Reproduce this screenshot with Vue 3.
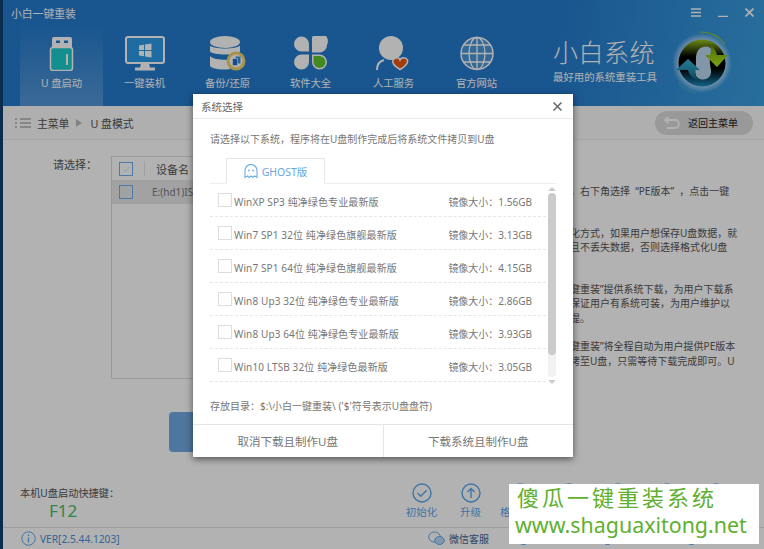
<template>
  <div class="desktop">
    <div class="window">
      <header class="header">
        <div class="title-row">
          <span class="app-title">小白一键重装</span>
          <div class="win-controls">
            <svg width="10" height="9" viewBox="0 0 10 9"><path d="M0 1h10M0 4.500h10M0 8h10" stroke="#fff" stroke-width="1.500" /></svg>
            <svg width="10" height="9" viewBox="0 0 10 9"><path d="M0 8.500h10" stroke="#fff" stroke-width="1.500" /></svg>
            <svg width="9" height="9" viewBox="0 0 9 9"><path d="M.5.500l8 8M8.500.500l-8 8" stroke="#fff" stroke-width="1.600" /></svg>
          </div>
        </div>
        <div class="nav-row">
          <nav class="nav">
            <div class="nav-item active">
              <svg width="36" height="35" viewBox="0 0 36 35">
                <rect x="8" y="1" width="20" height="12" rx="2" fill="#fff" />
                <rect x="12" y="4.500" width="4" height="2.500" fill="#257bce" />
                <rect x="20" y="4.500" width="4" height="2.500" fill="#257bce" />
                <rect x="6.500" y="11.500" width="22" height="23" rx="2.500" fill="#1ecdcd" stroke="#fff" stroke-width="1.500" />
                <rect x="22" y="18" width="2" height="11" fill="#fff" />
              </svg>
              <span>U 盘启动</span>
            </div>
            <div class="nav-item">
              <svg width="40" height="35" viewBox="0 0 40 35">
                <rect x="1" y="1" width="38" height="26" rx="2" fill="#2d9be8" stroke="#fff" stroke-width="2" />
                <path d="M14 9.500l5-.8v5.300h-5zM20 8.500l6.500-1v6.500H20zM14 15h5v5.300l-5-.8zM20 15h6.500v6.500l-6.500-1z" fill="#fff" />
                <path d="M16 27h8l1 5H15z" fill="#fff" />
                <rect x="10" y="31.500" width="20" height="3" fill="#fff" />
              </svg>
              <span>一键装机</span>
            </div>
            <div class="nav-item">
              <svg width="36" height="35" viewBox="0 0 36 35">
                <ellipse cx="15" cy="6" rx="15" ry="6" fill="#fff" />
                <path d="M0 9.500c3 4 27 4 30 0v6c-3 4-27 4-30 0z" fill="#fff" />
                <path d="M0 20c3 4 16 4 20 3.500V33c-8 1.500-18 0-20-3z" fill="#fff" />
                <circle cx="26" cy="25" r="9.500" fill="#f2d36b" />
                <circle cx="26" cy="25" r="6.500" fill="#fff" />
                <rect x="25.500" y="20.500" width="5" height="7" fill="#3b8fe0" />
                <rect x="22.500" y="22.500" width="5" height="7" fill="#1f6fc0" stroke="#fff" stroke-width=".6" />
              </svg>
              <span>备份/还原</span>
            </div>
            <div class="nav-item">
              <svg width="36" height="35" viewBox="0 0 36 35">
                <path d="M2 9a7.500 7.500 0 0 1 15 0v7.500H9.500A7.500 7.500 0 0 1 2 9z" fill="#fff" transform="translate(-1 -1)" />
                <path d="M19 1.500a7.500 7.500 0 0 1 15 7.500 7.500 7.500 0 0 1-7.500 7.500H19z" fill="#fff" />
                <path d="M1 26a7.500 7.500 0 0 1 7.500-7.500H16V26a7.500 7.500 0 0 1-15 0z" fill="#fff" />
                <path d="M19 18.500h7.500a7.500 7.500 0 0 1 0 15 7.500 7.500 0 0 1-7.500-7.500z" fill="#fff" />
                <path d="M20.500 20h6a6 6 0 0 1 0 12 6 6 0 0 1-6-6z" fill="#5fc52e" />
              </svg>
              <span>软件大全</span>
            </div>
            <div class="nav-item">
              <svg width="36" height="35" viewBox="0 0 36 35">
                <circle cx="15" cy="12" r="12" fill="#fff" />
                <path d="M1 34c0-6 3-9 7-10" stroke="#fff" stroke-width="2" fill="none" />
                <path d="M17 27c2-3 6-3 7 0 1-3 6-3 7.500 0 1 3-3 7-7.500 9.500-4-2.500-8.500-6.500-7-9.500z" transform="translate(0 -3)" fill="#e8560f" stroke="#fff" stroke-width="1.500" />
              </svg>
              <span>人工服务</span>
            </div>
            <div class="nav-item">
              <svg width="36" height="35" viewBox="0 0 36 35">
                <circle cx="18" cy="17.500" r="16" fill="#4b96d8" stroke="#fff" stroke-width="1.500" />
                <ellipse cx="18" cy="17.500" rx="8" ry="16" fill="none" stroke="#fff" stroke-width="1.300" />
                <path d="M18 1.500v32M2 17.500h32M4.500 9h27M4.500 26h27" stroke="#fff" stroke-width="1.300" />
              </svg>
              <span>官方网站</span>
            </div>
          </nav>
          <div class="brand">
            <div class="brand-name">小白系统</div>
            <div class="brand-sub">最好用的系统重装工具</div>
          </div>
          <svg class="brand-logo" width="64" height="64" viewBox="0 0 64 64">
            <defs>
              <radialGradient id="halo" cx="50%" cy="50%" r="50%">
                <stop offset="72%" stop-color="#d6ecff" stop-opacity=".8" />
                <stop offset="100%" stop-color="#d6ecff" stop-opacity="0" />
              </radialGradient>
              <linearGradient id="disc" x1="0" y1="0" x2="0" y2="1">
                <stop offset="0" stop-color="#9cc81c" />
                <stop offset=".36" stop-color="#000" />
                <stop offset=".62" stop-color="#000" />
                <stop offset="1" stop-color="#1a8fc4" />
              </linearGradient>
              <linearGradient id="greenArrow" x1="0" y1="0" x2="0" y2="1">
                <stop offset="0" stop-color="#6f9e12" />
                <stop offset="1" stop-color="#b4ea1c" />
              </linearGradient>
              <linearGradient id="blueArrow" x1="0" y1="0" x2="0" y2="1">
                <stop offset="0" stop-color="#37b8d8" />
                <stop offset="1" stop-color="#16688f" />
              </linearGradient>
            </defs>
            <circle cx="32" cy="32" r="30" fill="url(#halo)" />
            <path d="M30 1a31 31 0 0 1 25 12" fill="none" stroke="#8dc63f" stroke-width="1.200" />
            <path d="M8 52a31 31 0 0 0 18 10" fill="none" stroke="#3fa9c9" stroke-width="1.200" />
            <circle cx="32" cy="32" r="23.500" fill="url(#disc)" />
            <path d="M33 16c7-2 10 2 8 8-2 5-1 9 0 15 1 7-5 11-11 9-6-2-5-9-4-15 0-6-1-15 7-17z" fill="#b9d8ef" />
            <path d="M41 15c3 2 5 5 6 9h11L47 36 35 24h5c1-3 1-6 1-9z" fill="url(#greenArrow)" />
            <path d="M18 28L30 39h-5c0 4 1 7 3 10-5-2-9-5-10-10H6z" fill="url(#blueArrow)" />
          </svg>
        </div>
      </header>

      <div class="crumb-bar">
        <div class="crumbs">
          <svg width="16" height="10" viewBox="0 0 16 10"><path d="M0 1h2M5 1h11M0 5h2M5 5h11M0 9h2M5 9h11" stroke="#888" stroke-width="1" /></svg>
          <span>主菜单</span>
          <i class="crumb-arrow"></i>
          <span>U 盘模式</span>
        </div>
        <div class="back-btn">
          <svg width="16" height="13" viewBox="0 0 16 13"><path d="M4.500 1L1 4l3.500 3M1 4h10a3.500 3.500 0 0 1 0 8H3" fill="none" stroke="#fff" stroke-width="1.800" /></svg>
          <span>返回主菜单</span>
        </div>
      </div>

      <main class="main">
        <div class="pick-label">请选择：</div>
        <div class="pick-col">
          <div class="table">
            <div class="t-head">
              <svg class="t-check" width="14" height="14" viewBox="0 0 14 14"><rect x=".5" y=".5" width="13" height="13" fill="#fff" stroke="#6db0f2" /><path d="M4 7l2.300 2.300L10.500 5" fill="none" stroke="#cfe3f7" /></svg>
              <span class="t-sep"></span>
              <span>设备名</span>
            </div>
            <div class="t-row">
              <svg class="t-check" width="14" height="14" viewBox="0 0 14 14"><rect x=".5" y=".5" width="13" height="13" fill="#e9e9e9" stroke="#6db0f2" /><path d="M4 7l2.300 2.300L10.500 5" fill="none" stroke="#cfe3f7" /></svg>
              <span class="t-device">E:(hd1)ISO</span>
            </div>
          </div>
          <div class="make-btn"></div>
        </div>
        <div class="notes">
          <p class="note">，右下角选择&nbsp; “PE版本”&nbsp; ，点击一键</p>
          <p class="note">化方式，如果用户想保存U盘数据，就<br />且不丢失数据，否则选择格式化U盘</p>
          <p class="note">键重装”提供系统下载，为用户下载系<br />保证用户有系统可装，为用户维护以<br />提。</p>
          <p class="note tight">键重装”将全程自动为用户提供PE版本<br />拷至U盘，只需等待下载完成即可。U</p>
        </div>
      </main>

      <section class="tools-bar">
        <div class="hotkey">
          <div>本机U盘启动快捷键：</div>
          <div class="hotkey-value">F12</div>
        </div>
        <div class="tools">
          <div v-for="(t, i) in tools" :key="i" class="tool">
            <svg width="20" height="20" viewBox="0 0 20 20">
              <circle cx="10" cy="10" r="9" fill="none" stroke="#5da7ee" stroke-width="1.400" />
              <path v-if="t.icon === 'check'" d="M5.500 10l3.200 3.200 6-6" fill="none" stroke="#5da7ee" stroke-width="1.400" />
              <path v-else d="M10 15V5.500M6.500 9L10 5.500 13.500 9" fill="none" stroke="#5da7ee" stroke-width="1.400" />
            </svg>
            <span v-if="t.name" :class="{ cut: t.cut }">{{ t.name }}</span>
          </div>
        </div>
      </section>

      <footer class="status">
        <div class="version">
          <svg width="15" height="15" viewBox="0 0 15 15">
            <circle cx="7.500" cy="7.500" r="6.700" fill="none" stroke="#5da7ee" stroke-width="1" />
            <path d="M7.500 6.500V11.500M7.500 3.500v1.500" stroke="#5da7ee" stroke-width="1.300" />
          </svg>
          <span>VER[2.5.44.1203]</span>
        </div>
        <div class="links">
          <div v-for="(l, i) in links" :key="i" class="link">
            <svg width="17" height="15" viewBox="0 0 17 15">
              <ellipse cx="6.500" cy="6" rx="5.800" ry="5" fill="none" stroke="#5da7ee" stroke-width="1" />
              <ellipse cx="11.500" cy="9.500" rx="4.800" ry="4" fill="#b9d8f5" stroke="#5da7ee" stroke-width="1" />
            </svg>
            <span v-if="l">{{ l }}</span>
          </div>
        </div>
      </footer>

      <div class="mask"></div>

      <section class="dialog">
        <div class="dialog-head">
          <span>系统选择</span>
          <svg width="9" height="9" viewBox="0 0 9 9"><path d="M.5.500l8 8M8.500.500l-8 8" stroke="#666" stroke-width="1.500" /></svg>
        </div>
        <p class="dialog-intro">请选择以下系统，程序将在U盘制作完成后将系统文件拷贝到U盘</p>
        <div class="tab-strip">
          <div class="tab">
            <svg width="14" height="15" viewBox="0 0 14 15">
              <path d="M1 13.500V6.500a6 6 0 0 1 12 0v7l-2.400-1.600-1.800 1.600-1.800-1.600-1.800 1.600-1.800-1.600z" fill="none" stroke="#6aabea" stroke-width="1.100" />
              <circle cx="5" cy="6.500" r=".9" fill="#6aabea" />
              <circle cx="9" cy="6.500" r=".9" fill="#6aabea" />
            </svg>
            <span>GHOST版</span>
          </div>
        </div>
        <div class="list-wrap">
          <ul class="sys-list">
            <li v-for="s in systems" :key="s.name" class="sys-row">
              <i class="box"></i>
              <span class="sys-name">{{ s.name }}</span>
              <span class="sys-size">镜像大小：{{ s.size }}</span>
            </li>
          </ul>
          <div class="scrollbar">
            <i class="arrow-up"></i>
            <div class="track"><div class="thumb"></div></div>
            <i class="arrow-down"></i>
          </div>
        </div>
        <p class="save-dir">存放目录：$:\小白一键重装\ ('$'符号表示U盘盘符)</p>
        <div class="dialog-actions">
          <div class="action">取消下载且制作U盘</div>
          <div class="action">下载系统且制作U盘</div>
        </div>
      </section>

      <aside class="watermark">
        <div class="wm-name">傻瓜一键重装系统</div>
        <div class="wm-url">www.shaguaxitong.net</div>
      </aside>
    </div>
  </div>
</template>

<script setup>
const tools = [
  { name: '初始化', icon: 'check' },
  { name: '升级', icon: 'up' },
  { name: '格', icon: 'check', cut: true },
  { icon: 'up' },
  { icon: 'check' },
  { icon: 'up' },
  { icon: 'check' }
]

// only the first link is readable, the watermark covers the others
const links = ['微信客服', '', '', '']

const systems = [
  { name: 'WinXP SP3 纯净绿色专业最新版', size: '1.56GB' },
  { name: 'Win7 SP1 32位 纯净绿色旗舰最新版', size: '3.13GB' },
  { name: 'Win7 SP1 64位 纯净绿色旗舰最新版', size: '4.15GB' },
  { name: 'Win8 Up3 32位 纯净绿色专业最新版', size: '2.86GB' },
  { name: 'Win8 Up3 64位 纯净绿色专业最新版', size: '3.93GB' },
  { name: 'Win10 LTSB 32位 纯净绿色最新版', size: '3.05GB' }
]
</script>

<style>
html, body {
  margin: 0;
  background: #0b2c4d;
}
</style>

<style scoped>
* {
  box-sizing: border-box;
}

.desktop {
  width: 764px;
  height: 549px;
  padding-left: 3px;
  background: #0b2c4d;
  overflow: hidden;
  font-family: "Noto Sans", "Noto Sans CJK SC", sans-serif;
  font-size: 10px;
  color: #555;
}

.window {
  position: relative;
  display: flex;
  flex-direction: column;
  width: 761px;
  height: 549px;
  background: #fff;
}

.header {
  height: 106px;
  background: linear-gradient(100deg, #257bce 0%, #257bce 72%, #3a9fe0 100%);
  color: #fff;
}

.title-row {
  display: flex;
  justify-content: space-between;
  align-items: center;
  height: 25px;
  padding: 0 10px 0 8px;
}

.app-title {
  font-size: 10.8px;
}

.win-controls {
  display: flex;
  gap: 17px;
}

.nav-row {
  display: flex;
}

.nav {
  display: flex;
  padding-left: 17px;
  width: 550px;
}

.nav-item {
  display: flex;
  flex-direction: column;
  align-items: center;
  width: 83px;
  height: 81px;
  padding-top: 11px;
  gap: 4px;
  font-size: 10.3px;
}

.nav-item.active {
  background: linear-gradient(180deg, rgba(255, 255, 255, 0) 0%, rgba(255, 255, 255, 0.22) 100%);
}

.brand {
  width: 113px;
  padding-top: 10px;
}

.brand-name {
  font-size: 25px;
  font-weight: 300;
  line-height: 34px;
  letter-spacing: .5px;
}

.brand-sub {
  font-size: 10.4px;
  line-height: 16px;
  white-space: nowrap;
}

.brand-logo {
  margin: 6px 0 0 4px;
}

.crumb-bar {
  display: flex;
  justify-content: space-between;
  align-items: center;
  height: 34px;
  padding: 0 11px 0 12px;
  background: #fbfbfb;
  border-bottom: 1px solid #ececec;
}

.crumbs {
  display: flex;
  align-items: center;
  gap: 6px;
  font-size: 10.8px;
}

.crumb-arrow {
  margin: 0 2px 0 1px;
  border-left: 6px solid #bbb;
  border-top: 4px solid transparent;
  border-bottom: 4px solid transparent;
}

.back-btn {
  display: flex;
  align-items: center;
  gap: 8px;
  width: 98px;
  height: 24px;
  padding-left: 9px;
  border-radius: 12px;
  background: #dcdcdc;
  color: #222;
}

.main {
  display: flex;
  flex: 1;
  padding: 16px 0 0 50px;
  min-height: 0;
}

.pick-label {
  width: 58px;
  font-size: 11px;
}

.pick-col {
  width: 459px;
  flex-shrink: 0;
}

.table {
  height: 223px;
  border: 1px solid #dcdcdc;
  background: #fff;
}

.t-head {
  display: flex;
  align-items: center;
  gap: 11px;
  height: 23px;
  padding-left: 7px;
  font-size: 11px;
}

.t-sep {
  width: 1px;
  height: 15px;
  background: #e4e4e4;
}

.t-row {
  display: flex;
  align-items: center;
  gap: 19px;
  height: 24px;
  padding-left: 7px;
  background: #e9e9e9;
}

.t-device {
  color: #777;
}

.t-check {
  flex-shrink: 0;
}

.make-btn {
  width: 340px;
  height: 40px;
  margin: 33px 0 0 58px;
  border-radius: 4px;
  background: #70aae4;
}

.notes {
  padding-top: 28px;
  white-space: nowrap;
  color: #555;
}

.note {
  margin: 0 0 27px;
  line-height: 14.5px;
}

.note.tight {
  margin-top: -13px;
}

.tools-bar {
  display: flex;
  justify-content: space-between;
  height: 42px;
  padding-left: 17px;
}

.hotkey {
  font-size: 10.2px;
}

.hotkey-value {
  margin: 0 0 0 29px;
  font-size: 17px;
  line-height: 22px;
  color: #3fc26a;
}

.tools {
  display: flex;
  width: 343px;
  margin-right: 24px;
  margin-top: -2px;
}

.tool {
  display: flex;
  flex-direction: column;
  align-items: center;
  width: 49px;
  gap: 1px;
  font-size: 10.5px;
  color: #5da7ee;
  white-space: nowrap;
}

.tool .cut {
  align-self: flex-start;
  margin-left: 5px;
}

.status {
  display: flex;
  align-items: center;
  height: 22px;
  padding-left: 18px;
  border-top: 1px solid #e2e2e2;
}

.version {
  display: flex;
  align-items: center;
  gap: 4px;
  width: 412px;
  font-size: 10.2px;
  color: #4b8fd6;
}

.links {
  display: flex;
}

.link {
  display: flex;
  align-items: center;
  gap: 4px;
  width: 84px;
  color: #3f628c;
  white-space: nowrap;
}

.mask {
  position: absolute;
  inset: 0;
  background: rgba(0, 0, 0, 0.3);
}

.dialog {
  position: absolute;
  left: 190px;
  top: 94px;
  display: flex;
  flex-direction: column;
  width: 380px;
  height: 363px;
  background: #fff;
  box-shadow: 0 2px 7px rgba(0, 0, 0, 0.55);
}

.dialog-head {
  display: flex;
  justify-content: space-between;
  align-items: center;
  height: 27px;
  padding: 0 11px 0 8px;
  border-bottom: 1px solid #e9e9e9;
  font-size: 10.5px;
  color: #666;
}

.dialog-intro {
  margin: 11px 0 0 17px;
  line-height: 15px;
  padding-top: 2px;
  color: #777;
}

.tab-strip {
  margin: 11px 17px 0;
  height: 26px;
  padding-left: 16px;
  border-bottom: 1px solid #eee;
}

.tab {
  display: flex;
  justify-content: center;
  align-items: center;
  gap: 4px;
  width: 99px;
  height: 26px;
  padding-top: 1px;
  border: 1px solid #e6e6e6;
  border-bottom: 1px solid #fff;
  color: #6aa5e0;
  font-size: 10.5px;
}

.list-wrap {
  display: flex;
  margin-left: 17px;
  height: 200px;
}

.sys-list {
  width: 336px;
  height: 199px;
  margin: 0;
  padding: 0;
  list-style: none;
}

.sys-row {
  display: flex;
  align-items: center;
  height: 33px;
  padding: 3px 14px 0 8px;
  border-bottom: 1px dashed #e6e6e6;
  color: #777;
}

.box {
  flex-shrink: 0;
  width: 14px;
  height: 14px;
  margin: -3px 2px 0 0;
  border: 1px solid #ddd;
}

.sys-name {
  flex: 1;
  white-space: nowrap;
  letter-spacing: .12px;
}

.sys-size {
  white-space: nowrap;
}

.scrollbar {
  display: flex;
  flex-direction: column;
  align-items: center;
  width: 8px;
  margin-left: 2px;
  padding-top: 3px;
}

.arrow-up {
  border-left: 4px solid transparent;
  border-right: 4px solid transparent;
  border-bottom: 4px solid #ccc;
}

.arrow-down {
  margin-top: 3px;
  border-left: 4px solid transparent;
  border-right: 4px solid transparent;
  border-top: 4px solid #ccc;
}

.track {
  width: 8px;
  height: 184px;
  margin-top: 2px;
  border-radius: 4px;
  background: #f1f1f1;
}

.thumb {
  height: 162px;
  border-radius: 4px;
  background: #cbcbcb;
}

.save-dir {
  margin: 15px 0 0 17px;
  line-height: 15px;
  color: #777;
}

.dialog-actions {
  display: flex;
  height: 33px;
  margin-top: 10px;
  border-top: 1px solid #e6e6e6;
}

.action {
  flex: 1;
  line-height: 33px;
  text-align: center;
  font-size: 11.5px;
  color: #777;
}

.action + .action {
  border-left: 1px solid #e6e6e6;
}

.watermark {
  position: absolute;
  left: 506px;
  top: 484px;
  width: 250px;
  height: 60px;
  padding-left: 6px;
  background: #fff;
  color: #5fb030;
  white-space: nowrap;
}

.wm-name {
  padding-left: 2px;
  font-size: 22px;
  line-height: 27px;
  letter-spacing: 3px;
}

.wm-url {
  font-size: 21.4px;
  line-height: 28px;
}
</style>
